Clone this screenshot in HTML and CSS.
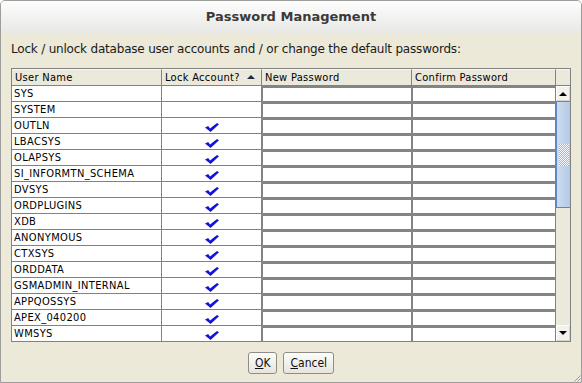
FILE: index.html
```html
<!DOCTYPE html>
<html>
<head>
    <title>Password Management</title>
    <link rel="stylesheet" href="styles.css">
</head>
<body>
<div class="window">
    <div class="titlebar">Password Management</div>
    <div class="content">
        <p class="intro">Lock / unlock database user accounts and / or change the default passwords:</p>

        <div class="grid">
            <div class="grid-head">
                <div class="hcell c-name">User Name</div>
                <div class="hcell c-lock">Lock Account? <span class="sort-up"></span></div>
                <div class="hcell c-new">New Password</div>
                <div class="hcell c-confirm">Confirm Password</div>
                <div class="hcell c-corner"></div>
            </div>
            <div class="grid-body">
                <div class="rows">
                    <div class="row"><div class="cell c-name">SYS</div><div class="cell c-lock"></div><div class="cell c-new"></div><div class="cell c-confirm"></div></div>
                    <div class="row"><div class="cell c-name">SYSTEM</div><div class="cell c-lock"></div><div class="cell c-new"></div><div class="cell c-confirm"></div></div>
                    <div class="row"><div class="cell c-name">OUTLN</div><div class="cell c-lock"><svg class="check" viewBox="0 0 14 9"><path d="M0 4.6 L3.2 3 L5 5.4 L12 0 L14 1.2 L5.6 9 Z"/></svg></div><div class="cell c-new"></div><div class="cell c-confirm"></div></div>
                    <div class="row"><div class="cell c-name">LBACSYS</div><div class="cell c-lock"><svg class="check" viewBox="0 0 14 9"><path d="M0 4.6 L3.2 3 L5 5.4 L12 0 L14 1.2 L5.6 9 Z"/></svg></div><div class="cell c-new"></div><div class="cell c-confirm"></div></div>
                    <div class="row"><div class="cell c-name">OLAPSYS</div><div class="cell c-lock"><svg class="check" viewBox="0 0 14 9"><path d="M0 4.6 L3.2 3 L5 5.4 L12 0 L14 1.2 L5.6 9 Z"/></svg></div><div class="cell c-new"></div><div class="cell c-confirm"></div></div>
                    <div class="row"><div class="cell c-name">SI_INFORMTN_SCHEMA</div><div class="cell c-lock"><svg class="check" viewBox="0 0 14 9"><path d="M0 4.6 L3.2 3 L5 5.4 L12 0 L14 1.2 L5.6 9 Z"/></svg></div><div class="cell c-new"></div><div class="cell c-confirm"></div></div>
                    <div class="row"><div class="cell c-name">DVSYS</div><div class="cell c-lock"><svg class="check" viewBox="0 0 14 9"><path d="M0 4.6 L3.2 3 L5 5.4 L12 0 L14 1.2 L5.6 9 Z"/></svg></div><div class="cell c-new"></div><div class="cell c-confirm"></div></div>
                    <div class="row"><div class="cell c-name">ORDPLUGINS</div><div class="cell c-lock"><svg class="check" viewBox="0 0 14 9"><path d="M0 4.6 L3.2 3 L5 5.4 L12 0 L14 1.2 L5.6 9 Z"/></svg></div><div class="cell c-new"></div><div class="cell c-confirm"></div></div>
                    <div class="row"><div class="cell c-name">XDB</div><div class="cell c-lock"><svg class="check" viewBox="0 0 14 9"><path d="M0 4.6 L3.2 3 L5 5.4 L12 0 L14 1.2 L5.6 9 Z"/></svg></div><div class="cell c-new"></div><div class="cell c-confirm"></div></div>
                    <div class="row"><div class="cell c-name">ANONYMOUS</div><div class="cell c-lock"><svg class="check" viewBox="0 0 14 9"><path d="M0 4.6 L3.2 3 L5 5.4 L12 0 L14 1.2 L5.6 9 Z"/></svg></div><div class="cell c-new"></div><div class="cell c-confirm"></div></div>
                    <div class="row"><div class="cell c-name">CTXSYS</div><div class="cell c-lock"><svg class="check" viewBox="0 0 14 9"><path d="M0 4.6 L3.2 3 L5 5.4 L12 0 L14 1.2 L5.6 9 Z"/></svg></div><div class="cell c-new"></div><div class="cell c-confirm"></div></div>
                    <div class="row"><div class="cell c-name">ORDDATA</div><div class="cell c-lock"><svg class="check" viewBox="0 0 14 9"><path d="M0 4.6 L3.2 3 L5 5.4 L12 0 L14 1.2 L5.6 9 Z"/></svg></div><div class="cell c-new"></div><div class="cell c-confirm"></div></div>
                    <div class="row"><div class="cell c-name">GSMADMIN_INTERNAL</div><div class="cell c-lock"><svg class="check" viewBox="0 0 14 9"><path d="M0 4.6 L3.2 3 L5 5.4 L12 0 L14 1.2 L5.6 9 Z"/></svg></div><div class="cell c-new"></div><div class="cell c-confirm"></div></div>
                    <div class="row"><div class="cell c-name">APPQOSSYS</div><div class="cell c-lock"><svg class="check" viewBox="0 0 14 9"><path d="M0 4.6 L3.2 3 L5 5.4 L12 0 L14 1.2 L5.6 9 Z"/></svg></div><div class="cell c-new"></div><div class="cell c-confirm"></div></div>
                    <div class="row"><div class="cell c-name">APEX_040200</div><div class="cell c-lock"><svg class="check" viewBox="0 0 14 9"><path d="M0 4.6 L3.2 3 L5 5.4 L12 0 L14 1.2 L5.6 9 Z"/></svg></div><div class="cell c-new"></div><div class="cell c-confirm"></div></div>
                    <div class="row"><div class="cell c-name">WMSYS</div><div class="cell c-lock"><svg class="check" viewBox="0 0 14 9"><path d="M0 4.6 L3.2 3 L5 5.4 L12 0 L14 1.2 L5.6 9 Z"/></svg></div><div class="cell c-new"></div><div class="cell c-confirm"></div></div>
                </div>
                <div class="vscroll">
                    <div class="sb-btn sb-up"><span class="arrow-up"></span></div>
                    <div class="sb-thumb"><div class="sb-grip"></div></div>
                    <div class="sb-track"></div>
                    <div class="sb-btn sb-down"><span class="arrow-down"></span></div>
                </div>
            </div>
        </div>

        <div class="buttons">
            <button class="btn"><u>O</u>K</button>
            <button class="btn"><u>C</u>ancel</button>
        </div>
    </div>
    <svg class="grip" viewBox="0 0 8 8"><path d="M7.5 1.5 L1.5 7.5 M7.5 4.5 L4.5 7.5" stroke="#9a9a94" stroke-width="1"/></svg>
</div>
</body>
</html>
```

FILE: styles.css
```css
html, body {
    margin: 0;
    padding: 0;
    background: #ffffff;
}
.window {
    position: relative;
    width: 582px;
    height: 383px;
    box-sizing: border-box;
    border: 1px solid #9d9d9b;
    border-radius: 5px 5px 0 0;
    background: #ece9d8;
    display: flex;
    flex-direction: column;
    overflow: hidden;
}
.titlebar {
    height: 32px;
    flex: none;
    background: linear-gradient(#fdfdfd, #e8e8e6);
    font-family: "DejaVu Sans", sans-serif;
    font-weight: bold;
    font-size: 13px;
    color: #3a3a3a;
    text-align: center;
    line-height: 31px;
}
.content {
    flex: 1;
    padding: 8px 10px 0 10px;
    display: flex;
    flex-direction: column;
}
.intro {
    margin: 0 0 11px 0;
    font-family: "DejaVu Sans", sans-serif;
    font-size: 12px;
    letter-spacing: -0.2px;
    line-height: 16px;
    color: #1a1a1a;
}
.grid {
    width: 558px;
    border: 1px solid #828282;
    font-family: "DejaVu Sans Condensed", "DejaVu Sans", sans-serif;
    font-size: 11px;
    color: #000;
}
.grid-head {
    display: flex;
    height: 17px;
    box-sizing: border-box;
    border-bottom: 1px solid #828282;
    background: #ebe9db;
}
.hcell {
    box-sizing: border-box;
    height: 16px;
    padding-left: 3px;
    border-right: 1px solid #828282;
    border-top: 1px solid #f8f7f2;
    line-height: 15px;
    white-space: nowrap;
    letter-spacing: 0.3px;
}
.c-name { width: 150px; }
.c-lock { width: 100px; }
.c-new { width: 150px; }
.c-confirm { width: 144px; }
.c-corner { width: 14px; border-right: 0; }
.sort-up {
    display: inline-block;
    margin-left: 4px;
    vertical-align: 2px;
    border-left: 4px solid transparent;
    border-right: 4px solid transparent;
    border-bottom: 4px solid #1e2a44;
}
.grid-body {
    display: flex;
}
.rows {
    width: 544px;
    background: #ffffff;
}
.row {
    display: flex;
    height: 16px;
}
.cell {
    box-sizing: border-box;
    height: 16px;
    border-bottom: 1px solid #828282;
    border-right: 1px solid #828282;
    line-height: 15px;
    white-space: nowrap;
    letter-spacing: 0.35px;
}
.row:last-child {
    height: 15px;
}
.row:last-child .cell {
    height: 15px;
    border-bottom: 0;
}
.cell.c-name {
    padding-left: 2px;
}
.cell.c-lock {
    display: flex;
    justify-content: center;
    align-items: flex-end;
    padding-bottom: 1px;
}
.cell.c-new,
.cell.c-confirm {
    border-left: 1px solid #858585;
    border-top: 2px solid #858585;
}
.cell.c-new { width: 150px; }
.cell.c-lock { width: 100px; }
.cell.c-name { width: 150px; }
.cell.c-confirm { width: 144px; }
.check {
    width: 14px;
    height: 9px;
    fill: #1414d8;
}
.vscroll {
    width: 14px;
    display: flex;
    flex-direction: column;
    background: #ebe9db;
}
.sb-btn {
    box-sizing: border-box;
    display: flex;
    align-items: center;
    justify-content: center;
    background: #f3f2ec;
    border: 1px solid #ffffff;
    border-right-color: #d8d6ca;
    border-bottom-color: #d8d6ca;
}
.sb-up { height: 15px; }
.sb-down { height: 16px; }
.arrow-up {
    border-left: 4px solid transparent;
    border-right: 4px solid transparent;
    border-bottom: 4px solid #000;
}
.arrow-down {
    border-left: 4px solid transparent;
    border-right: 4px solid transparent;
    border-top: 4px solid #000;
}
.sb-thumb {
    box-sizing: border-box;
    height: 107px;
    border: 1px solid #5f85c2;
    border-right: 0;
    background: linear-gradient(to right, #cfdcef, #b3c9e6);
    display: flex;
    align-items: center;
    justify-content: center;
}
.sb-grip {
    width: 10px;
    height: 22px;
    background-image: repeating-conic-gradient(#f4f7fb 0 25%, #9fb7d9 0 50%);
    background-size: 2px 2px;
}
.sb-track {
    height: 117px;
}
.buttons {
    display: flex;
    justify-content: center;
    gap: 6px;
    margin-top: 10px;
}
.btn {
    height: 22px;
    padding: 0 6px;
    border: 1px solid #8e8d88;
    border-radius: 3px;
    background: linear-gradient(#fdfdfb, #e6e4dc);
    font-family: "DejaVu Sans Condensed", "DejaVu Sans", sans-serif;
    font-size: 12px;
    color: #111;
}
.grip {
    position: absolute;
    right: 0;
    bottom: 0;
    width: 8px;
    height: 8px;
}
```
